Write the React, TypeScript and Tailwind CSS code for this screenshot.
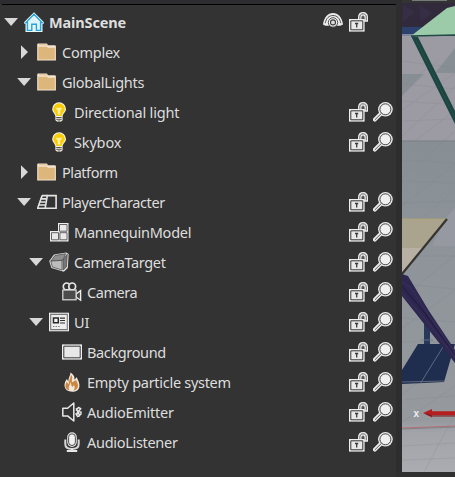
import React from "react";

type IconName =
  | "home" | "folder" | "bulb" | "entity" | "model" | "cube" | "camera"
  | "ui" | "background" | "flame" | "speaker" | "mic";

type Row = {
  label: string;
  icon: IconName;
  indent: string;
  tracking: string;
  arrow?: "open" | "closed";
  eye?: boolean;
  lock?: boolean;
  find?: boolean;
};

const rows: Row[] = [
  { label: "MainScene", icon: "home", indent: "pl-[4px]", tracking: "tracking-[-0.14px] font-bold", arrow: "open", eye: true, lock: true },
  { label: "Complex", icon: "folder", indent: "pl-[17px]", tracking: "tracking-[-0.25px]", arrow: "closed" },
  { label: "GlobalLights", icon: "folder", indent: "pl-[17px]", tracking: "tracking-[-0.25px]", arrow: "open" },
  { label: "Directional light", icon: "bulb", indent: "pl-[29px]", tracking: "tracking-[-0.16px]", lock: true, find: true },
  { label: "Skybox", icon: "bulb", indent: "pl-[29px]", tracking: "tracking-[-0.16px]", lock: true, find: true },
  { label: "Platform", icon: "folder", indent: "pl-[17px]", tracking: "tracking-[-0.44px]", arrow: "closed" },
  { label: "PlayerCharacter", icon: "entity", indent: "pl-[17px]", tracking: "tracking-[-0.39px]", arrow: "open", lock: true, find: true },
  { label: "MannequinModel", icon: "model", indent: "pl-[29px]", tracking: "tracking-[-0.25px]", lock: true, find: true },
  { label: "CameraTarget", icon: "cube", indent: "pl-[29px]", tracking: "tracking-[-0.38px]", arrow: "open", lock: true, find: true },
  { label: "Camera", icon: "camera", indent: "pl-[42px]", tracking: "tracking-[-0.46px]", lock: true, find: true },
  { label: "UI", icon: "ui", indent: "pl-[29px]", tracking: "tracking-[-0.2px]", arrow: "open", lock: true, find: true },
  { label: "Background", icon: "background", indent: "pl-[42px]", tracking: "tracking-[-0.37px]", lock: true, find: true },
  { label: "Empty particle system", icon: "flame", indent: "pl-[42px]", tracking: "tracking-[-0.29px]", lock: true, find: true },
  { label: "AudioEmitter", icon: "speaker", indent: "pl-[42px]", tracking: "tracking-[-0.24px]", lock: true, find: true },
  { label: "AudioListener", icon: "mic", indent: "pl-[42px]", tracking: "tracking-[-0.3px]", lock: true, find: true },
];

const glyphs: Record<IconName, React.ReactNode> = {
  home: (
    <>
      <path d="M10 .3 19.8 10v1.7h-1.3V20H1.5v-8.3H.2V10Z" fill="#e9f7fd" />
      <path d="M10 2.3 18 10.6h-1.4v7.8h-4.2v-6.1H7.8v6.1H3.4v-7.8H2Z" fill="#dff3fb" stroke="#25a5da" strokeWidth="1.4" />
    </>
  ),
  folder: (
    <>
      <path d="M.2 18.4V2.4q0-1 1-1h8.6l1.4 1.8h6.4q1.3 0 1.3 1v14.2Z" fill="#f3e4ce" />
      <path d="M1.3 17.5V4.7h8.4l1.4 1h6.7v11.8Z" fill="#dcb67a" />
      <path d="M2 2.8h7.3l1 1.2" fill="none" stroke="#e6bd89" strokeWidth="1" />
    </>
  ),
  bulb: (
    <>
      <path d="M10 .2a6.8 6.8 0 0 0-6.8 6.9c0 3 2.4 4 3.2 7.2v4l1.8 1.5h3.6l1.8-1.5v-4C14.4 11 17 10 17 7.1A6.8 6.8 0 0 0 10 .2Z" fill="#f4f1e5" />
      <path d="M10 1.3a5.7 5.7 0 0 0-5.7 5.8c0 2.7 2.4 3.7 3 7h5.4c.6-3.3 3.1-4.3 3.1-7A5.7 5.7 0 0 0 10 1.3Z" fill="#f8cd08" />
      <path d="M7.2 6h5.6l-1.3 2H11v4.2H9V8h-.8Z" fill="#fff0a6" stroke="#fff5c8" strokeWidth=".4" />
      <path d="M7.2 15.5h5.5M7.2 17.3h5.5M8.6 19h2.8" stroke="#55524c" strokeWidth="1" />
    </>
  ),
  entity: (
    <g fill="none" stroke="#e4e4e4">
      <path d="M10.3 3.6h8.8v12.6H8.2l2.1-12.6Z" strokeWidth="1.6" />
      <path d="M5 3.6h5.5M3.5 6.9h6M2.4 10h6.2M1.4 13h6.7M0 16.2h8M5.4 3.4 3.7 7.2M4 7 2.7 10M2.9 10l-1.2 3M1.8 13 .5 16.6" strokeWidth="1.6" />
    </g>
  ),
  model: (
    <>
      <path d="M9 1h10.5v18.5H1V9h8Z" fill="#eeeeee" />
      <path d="M10.5 2.5H18v6.7h-7.5ZM2.5 10.7h7v7.1h-7ZM10.9 10.7H18v7.1h-7.1Z" fill="#e9e9e9" stroke="#555" strokeWidth=".9" />
    </>
  ),
  cube: (
    <>
      <path d="M.2 9 5 2.4 17.3.5l2.4 1.6-.9 13.8-4 3.8L2.4 15.9Z" fill="#dedede" />
      <path d="M1.8 9.1 6 3.5l10.6-1.8L14 8.1Z" fill="#8e8e8e" stroke="#444" strokeWidth=".7" />
      <path d="M1.8 9.1 13 8.4v9.7L3.4 15Z" fill="#bdbdbd" stroke="#444" strokeWidth=".7" />
      <path d="M14 8 18.3 2.3l-.9 12.6-3.2 3.1Z" fill="#777" stroke="#444" strokeWidth=".7" />
    </>
  ),
  camera: (
    <>
      <circle cx="4.7" cy="4.4" r="3.4" fill="#333" stroke="#e6e6e6" strokeWidth="1.7" />
      <circle cx="10.2" cy="4.4" r="3.4" fill="#333" stroke="#e6e6e6" strokeWidth="1.7" />
      <path d="m14 12 4.6-3.4v9.6L14 15Z" fill="#444" stroke="#eee" strokeWidth="1.4" />
      <rect x=".8" y="8" width="13.3" height="9.8" fill="#4b4b4b" stroke="#dedede" strokeWidth="1.2" />
    </>
  ),
  ui: (
    <>
      <path d="M0 .7h20v18.6H0Z" fill="#eeeeee" />
      <path d="M1.7 2.4h16.6v15.2H1.7Z" fill="#eee" stroke="#777" strokeWidth="1.1" />
      <path d="M4.5 6h4.8v4.8H4.5Z" fill="#f5f5f5" stroke="#292929" strokeWidth="1.5" />
      <path d="M11 6.1h5M11 8.5h5M11 11h5" stroke="#333" strokeWidth="1.1" />
      <path d="M4 14.5h7" stroke="#777" strokeDasharray="1.4 1.2" />
    </>
  ),
  background: (
    <>
      <path d="M0 2.4h20v15.2H0Z" fill="#eeeeee" />
      <path d="M1.8 4.2h16.4v11.6H1.8Z" fill="#e8e8e8" stroke="#393939" strokeWidth="1" />
    </>
  ),
  flame: (
    <>
      <path d="M8.5.4c4 3 4.3 4.8 3.8 7.4l2.4-2.6c2 4 3 6 2.7 9.2-.4 3.3-3.1 5.3-7.1 5.3-4.4 0-7.5-2-7.8-5.9-.2-2.4 1-5 2.3-6.7l1.6 2.4C6 6 8.3 4 8.5.4Z" fill="#f0e8dd" />
      <path d="M9 3c3 3-.6 5.4 1.5 7.3l3.6-2.4c.5 2.1 2.8 4 1.6 7.3-.6 1.9-2.3 3-4.2 3.3 1.7-2.1 1.2-4 .4-5.5l-1.4 2c-1.7-1.3-1-3.4-2-5-.3 3.6-3 4.7-1.1 8.3-4.7-1.2-4.7-4.8-2.7-8.5l2 2.7C6.6 8.4 8.5 6.7 9 3Z" fill="#cd8640" />
    </>
  ),
  speaker: (
    <g fill="none" stroke="#e8e8e8" strokeWidth="1.5" strokeLinejoin="round">
      <path d="M.8 6.3h4.8L11.8 1v18l-6.2-5.1H.8Z" />
      <path d="m14 8.6 2.4-3.1 2.4 1.2-2.9 3 3.2.2-.3 2.6-4.5-1M14.7 10.4l2.9 3.4-2 .8-2-3.3M14 6.3l3 5.7" strokeWidth="1.4" />
    </g>
  ),
  mic: (
    <>
      <path d="M3.3 7.6v4.5q0 4.9 6.7 4.9t6.7-4.9V7.6" fill="none" stroke="#d8d8d8" strokeWidth="2" />
      <path d="M10 16.6v2M4.8 19h10.4" stroke="#e7e7e7" strokeWidth="1.9" />
      <rect x="5.2" y=".3" width="9.6" height="14.6" rx="4.8" fill="#e9e9e9" />
      <rect x="6.6" y="1.8" width="6.8" height="11.7" rx="3.4" fill="#f0f0f0" stroke="#4e4e4e" strokeWidth="1" />
    </>
  ),
};

function Glyph({ children }: { children: React.ReactNode }) {
  return <svg viewBox="0 0 20 20" className="h-5 w-5 shrink-0">{children}</svg>;
}

function Arrow({ state }: { state?: "open" | "closed" }) {
  return (
    <svg viewBox="0 0 14 14" className="h-3.5 w-3.5 shrink-0">
      {state === "open" && <path d="M.2 2.9H14L7.1 10.9Z" fill="#d8d8d8" />}
      {state === "closed" && <path d="M4 .2v13.7l7-6.8Z" fill="#d8d8d8" />}
    </svg>
  );
}

function Eye() {
  return (
    <Glyph>
      <path d="M0 12.6C.8 5.4 4.9 1 10 1S19.2 5.4 20 12.6c-2.2 1.4-4.6 1.5-6.2.9A5 5 0 0 1 6.2 13.5c-2 .6-4.3.5-6.2-.9Z" fill="#ececec" />
      <path d="M2.2 11.2C3.1 6.3 6 3.5 10 3.5s6.9 2.8 7.8 7.7" fill="none" stroke="#444" strokeWidth=".9" />
      <circle cx="10" cy="10.4" r="4.7" fill="#eee" stroke="#444" strokeWidth=".9" />
      <circle cx="10" cy="10.4" r="2.5" fill="#ddd" stroke="#3b3b3b" strokeWidth="1.1" />
    </Glyph>
  );
}

function Unlock() {
  return (
    <Glyph>
      <path d="M9 7V5.2C9 2 11 .1 14 .1s5 2 5 5.1v4.6h-4.2V5.4q0-1.2-.8-1.2t-.8 1.2V8H9Z" fill="#ededed" />
      <path d="M10.8 7V5.3c0-2.1 1.1-3.5 3.2-3.5s3.3 1.4 3.3 3.5v3M12.9 7V5q0-1 1.1-1t1.1 1v3.5" fill="none" stroke="#444" strokeWidth=".8" />
      <path d="M0 7h15.6v12.6H0Z" fill="#efefef" />
      <path d="M1.8 8.8h12v9H1.8Z" fill="#e8e8e8" stroke="#353535" strokeWidth="1" />
      <path d="M6 11.5h3.2M7.7 11v4.4" stroke="#3b3b3b" strokeWidth="1.3" />
    </Glyph>
  );
}

function Magnifier() {
  return (
    <Glyph>
      <path d="m8.6 10.8-6.8 6.9" stroke="#ededed" strokeWidth="3.8" strokeLinecap="round" />
      <circle cx="12.4" cy="7.3" r="7.3" fill="#efefef" />
      <circle cx="12.4" cy="7.3" r="5.5" fill="#f0f0f0" stroke="#444" strokeWidth="1" />
      <path d="m8.4 11.4-6.6 6.5" stroke="#555" strokeWidth="1" />
    </Glyph>
  );
}

function TreeRow({ row }: { row: Row }) {
  return (
    <div className={`flex h-[30px] items-center pr-[3px] ${row.indent}`}>
      <Arrow state={row.arrow} />
      <div className="ml-1.5 flex"><Glyph>{glyphs[row.icon]}</Glyph></div>
      <span className={`ml-[5px] whitespace-nowrap text-[14.5px] leading-5 text-[#dedede] ${row.tracking}`}>{row.label}</span>
      <div className="ml-auto grid grid-cols-[26px_24px_20px]">
        <div>{row.eye && <Eye />}</div>
        <div>{row.lock && <Unlock />}</div>
        <div>{row.find && <Magnifier />}</div>
      </div>
    </div>
  );
}

function SceneView() {
  return (
    <svg viewBox="402 0 53 472" className="h-[472px] w-[53px] shrink-0">
      <defs>
        <linearGradient id="floor" x1="0" y1="0" x2="0" y2="1">
          <stop offset="0" stopColor="#9c9ba4" />
          <stop offset=".298" stopColor="#9c9ba4" />
          <stop offset=".3" stopColor="#888f94" />
          <stop offset=".55" stopColor="#8e9499" />
          <stop offset=".89" stopColor="#969a9f" />
          <stop offset=".92" stopColor="#a3a4aa" />
          <stop offset="1" stopColor="#abacb1" />
        </linearGradient>
      </defs>
      <path d="M402 0h53v472h-53Z" fill="url(#floor)" />
      <path d="M402 0h53v3h-53Z" fill="#333334" />
      <path d="M412 0h35v1h-35Z" fill="#777a7b" />
      <path d="M402 3h53v33h-53Z" fill="#302a3c" />
      <path d="m403 5 12 7-12 10M419 5l14 8-12 8" fill="#3a3148" opacity=".65" />
      <path d="M402 27h22l-9 9h-13Z" fill="#2b426f" />
      <path d="M402 34h11v2h-11Z" fill="#8584a0" />
      <path d="M402 74h22l-22 22ZM455 48v25h-20Z" fill="#888f94" />
      <g stroke="#82858d" strokeWidth=".6" opacity=".42">
        <path d="m402 136 53-49M402 86l36-25M402 110l53-37M415 141l40-31M402 178l53-47M402 206l53-42M402 235l53-45M402 298l53-43M402 328l53-38M402 395l53-42M402 422l53-36M424 472l31-58" />
        <path d="m402 61 53 7M402 84l53 5M402 101l53 4M402 121l53-2M402 160l53 3M402 181l53 2M402 203l53-2M402 256h53M402 284l53 5M402 318l53 4M402 342h53M402 400l53-4M402 446l53-3M402 460l53-2" />
      </g>
      <path d="M402 141h53" stroke="#767d83" />
      <path d="m411 36 36-28 8-2v29Z" fill="#9ccbaa" />
      <path d="m411 36 44-1" stroke="#224b46" strokeWidth="1.4" />
      <path d="m411 36 7 1 37 74v13Z" fill="#1c4442" />
      <path d="m416 40 39 78" stroke="#24514b" strokeWidth="1" />
      <path d="m446 218 9-10v38h-23Z" fill="#9799a2" />
      <path d="M402 219h45l-45 55Z" fill="#aaa48f" />
      <path d="M402 248h21l-21 26Z" fill="#b9b0a4" />
      <path d="M402 219h45" stroke="#b2a369" strokeWidth=".8" />
      <path d="m447 219-45 55" stroke="#343431" strokeWidth="2.2" />
      <path d="M424 312h6v33h-6Z" fill="#28375c" />
      <path d="M418 344h37l-11 38-42 2v-14Z" fill="#1f2d4f" />
      <path d="m443 347-23 37M402 382l42-1M421 340h12" stroke="#6d7889" strokeWidth=".8" />
      <path d="m402 274 6 2 21 35 26 39v13L402 296Z" fill="#2e2850" />
      <path d="m402 282 8 5 18 27 27 39M402 293l23 26 30 38" fill="none" stroke="#3a315a" strokeWidth="1" />
      <path d="m402 286 22 26 31 43" fill="none" stroke="#201b3a" />
      <text x="413.5" y="416.5" fill="#ededf2" fontFamily="Liberation Sans, sans-serif" fontSize="10" fontWeight="bold">x</text>
      <path d="m423 413 9-4v2.2h23v4h-23v2.3Z" fill="#b51e20" />
      <path d="m426 414 6 2h23" stroke="#75191c" fill="none" />
      <path d="m402 428 53-2" stroke="#b77075" strokeWidth="1.2" />
      <path d="m402 429 53-2" stroke="#787b80" strokeWidth=".8" />
    </svg>
  );
}

export default function App() {
  return (
    <div className="flex h-[477px] w-[455px] flex-col overflow-hidden bg-[#2d2d30] font-['Noto_Sans','Open_Sans',sans-serif]">
      <div className="flex h-[472px]">
        <div className="w-[396px] shrink-0 bg-[#333333]">
          <div className="h-1 bg-[#2d2d30]" />
          <div className="ml-0.5 h-px bg-black" />
          <div className="pt-0.5">
            {rows.map((row) => <TreeRow key={row.label} row={row} />)}
          </div>
        </div>
        <div className="w-1.5 shrink-0 bg-[#2d2d30]" />
        <SceneView />
      </div>
      <div className="flex h-[5px]">
        <div className="w-[396px] bg-[#333333]" />
        <div className="grow bg-[#303031]" />
      </div>
    </div>
  );
}
